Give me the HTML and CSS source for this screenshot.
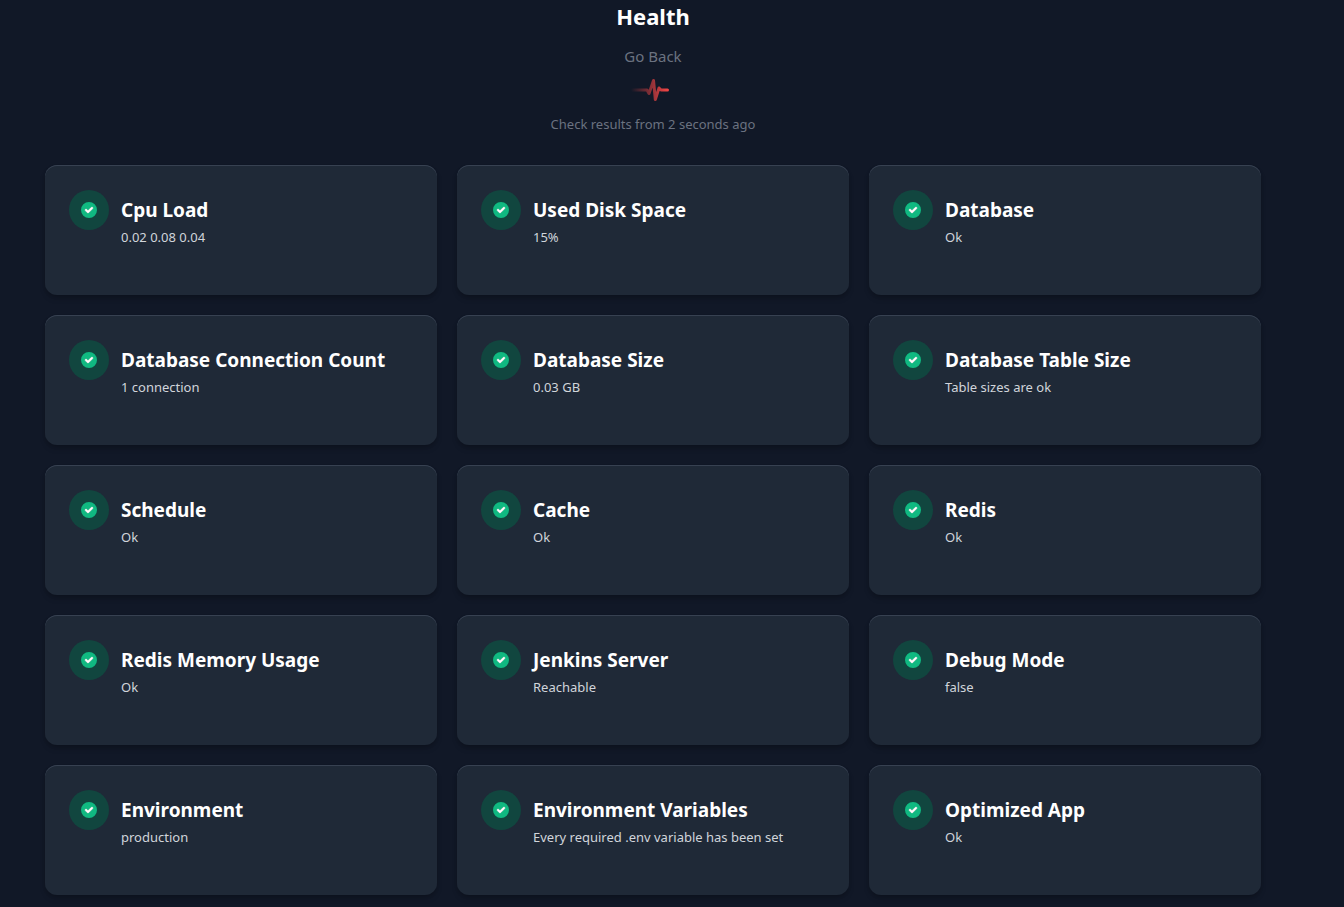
FILE: index.html
```html
<!DOCTYPE html>
<html lang="en">
<head>
<meta charset="utf-8">
<meta name="viewport" content="width=device-width, initial-scale=1">
<title>Health</title>
<link rel="stylesheet" href="styles.css">
</head>
<body>
<svg class="sprite" aria-hidden="true">
  <symbol id="check" viewBox="0 0 20 20">
    <path fill="currentColor" fill-rule="evenodd" d="M10 18a8 8 0 100-16 8 8 0 000 16zm3.707-9.293a1 1 0 00-1.414-1.414L9 10.586 7.707 9.293a1 1 0 00-1.414 1.414l2 2a1 1 0 001.414 0l4-4z"/>
    <path fill="#fff" stroke="#fff" stroke-width="0.4" d="M13.707 8.707a1 1 0 00-1.414-1.414L9 10.586 7.707 9.293a1 1 0 00-1.414 1.414l2 2a1 1 0 001.414 0l4-4z"/>
  </symbol>
</svg>
<header class="header">
  <h1 class="title">Health</h1>
  <a class="back" href="#">Go Back</a>
  <svg class="pulse" viewBox="0 0 44 24" aria-hidden="true">
    <defs>
      <linearGradient id="fade" gradientUnits="userSpaceOnUse" x1="0" y1="0" x2="36" y2="0">
        <stop offset="0" stop-color="#ef4444" stop-opacity="0"/>
        <stop offset="1" stop-color="#ef4444"/>
      </linearGradient>
    </defs>
    <path d="M1 12H16L18 15.500L22.500 2.500L24.300 21.500L28 10L30 12H36.500" fill="none" stroke="url(#fade)" stroke-width="3" stroke-linecap="round" stroke-linejoin="round"/>
  </svg>
  <p class="checked">Check results from 2 seconds ago</p>
</header>
<main class="grid">
  <section class="card"><span class="badge"><svg class="icon"><use href="#check"/></svg></span><div class="text"><h2 class="name">Cpu Load</h2><p class="status">0.02 0.08 0.04</p></div></section>
  <section class="card"><span class="badge"><svg class="icon"><use href="#check"/></svg></span><div class="text"><h2 class="name">Used Disk Space</h2><p class="status">15%</p></div></section>
  <section class="card"><span class="badge"><svg class="icon"><use href="#check"/></svg></span><div class="text"><h2 class="name">Database</h2><p class="status">Ok</p></div></section>
  <section class="card"><span class="badge"><svg class="icon"><use href="#check"/></svg></span><div class="text"><h2 class="name">Database Connection Count</h2><p class="status">1 connection</p></div></section>
  <section class="card"><span class="badge"><svg class="icon"><use href="#check"/></svg></span><div class="text"><h2 class="name">Database Size</h2><p class="status">0.03 GB</p></div></section>
  <section class="card"><span class="badge"><svg class="icon"><use href="#check"/></svg></span><div class="text"><h2 class="name">Database Table Size</h2><p class="status">Table sizes are ok</p></div></section>
  <section class="card"><span class="badge"><svg class="icon"><use href="#check"/></svg></span><div class="text"><h2 class="name">Schedule</h2><p class="status">Ok</p></div></section>
  <section class="card"><span class="badge"><svg class="icon"><use href="#check"/></svg></span><div class="text"><h2 class="name">Cache</h2><p class="status">Ok</p></div></section>
  <section class="card"><span class="badge"><svg class="icon"><use href="#check"/></svg></span><div class="text"><h2 class="name">Redis</h2><p class="status">Ok</p></div></section>
  <section class="card"><span class="badge"><svg class="icon"><use href="#check"/></svg></span><div class="text"><h2 class="name">Redis Memory Usage</h2><p class="status">Ok</p></div></section>
  <section class="card"><span class="badge"><svg class="icon"><use href="#check"/></svg></span><div class="text"><h2 class="name">Jenkins Server</h2><p class="status">Reachable</p></div></section>
  <section class="card"><span class="badge"><svg class="icon"><use href="#check"/></svg></span><div class="text"><h2 class="name">Debug Mode</h2><p class="status">false</p></div></section>
  <section class="card"><span class="badge"><svg class="icon"><use href="#check"/></svg></span><div class="text"><h2 class="name">Environment</h2><p class="status">production</p></div></section>
  <section class="card"><span class="badge"><svg class="icon"><use href="#check"/></svg></span><div class="text"><h2 class="name">Environment Variables</h2><p class="status">Every required .env variable has been set</p></div></section>
  <section class="card"><span class="badge"><svg class="icon"><use href="#check"/></svg></span><div class="text"><h2 class="name">Optimized App</h2><p class="status">Ok</p></div></section>
</main>
</body>
</html>
```

FILE: styles.css
```css
* {
  box-sizing: border-box;
}

body {
  margin: 0;
  padding-right: 38px;
  background: #111827;
  color: #fff;
  font-family: "Noto Sans", "Open Sans", sans-serif;
}

h1, h2, p {
  margin: 0;
}

.sprite {
  display: block;
  width: 0;
  height: 0;
}

.header {
  display: flex;
  flex-direction: column;
  align-items: center;
}

.title {
  font-size: 22px;
  line-height: 32px;
  font-weight: 700;
}

.back {
  margin-top: 12px;
  color: #6b7280;
  font-size: 15px;
  line-height: 24px;
  text-decoration: none;
}

.pulse {
  display: block;
  width: 44px;
  height: 24px;
  margin-top: 10px;
}

.checked {
  margin-top: 12px;
  color: #6b7280;
  font-size: 13px;
  line-height: 20px;
}

.grid {
  display: grid;
  grid-template-columns: repeat(3, 1fr);
  gap: 20px;
  max-width: 1280px;
  margin: 0 auto;
  padding: 31px 32px 12px;
}

.card {
  display: flex;
  align-items: flex-start;
  gap: 12px;
  min-height: 130px;
  padding: 25px 24px 24px;
  border-radius: 12px;
  background: #1f2937;
  box-shadow: inset 0 1px 0 #374151, 0 4px 6px -1px rgba(0, 0, 0, 0.2), 0 2px 4px -1px rgba(0, 0, 0, 0.12);
}

.badge {
  display: flex;
  flex: none;
  align-items: center;
  justify-content: center;
  width: 40px;
  height: 40px;
  border-radius: 50%;
  background: #11463f;
}

.icon {
  width: 20px;
  height: 20px;
  color: #10b981;
}

.text {
  padding-top: 6px;
}

.name {
  font-size: 19px;
  line-height: 28px;
  font-weight: 700;
}

.status {
  margin-top: 3px;
  color: #d1d5db;
  font-size: 13px;
  line-height: 20px;
}
```
